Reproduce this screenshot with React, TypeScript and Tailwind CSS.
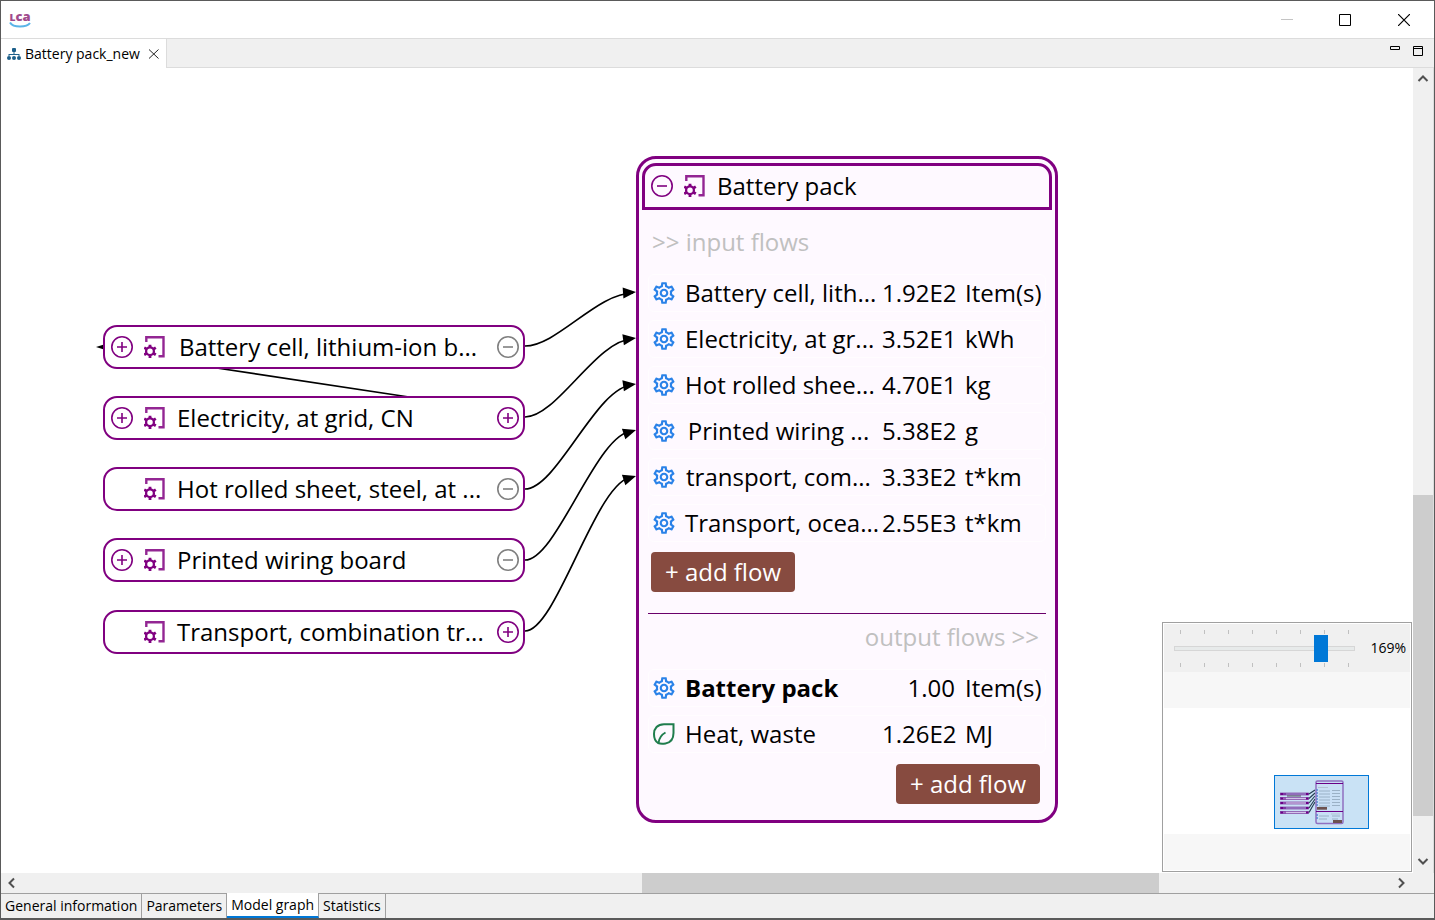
import React, { useState } from "react";
import { MdOutlineSettings } from "react-icons/md";

type Sign = "plus" | "minus";

interface ProcessNode {
  name: string;
  top: number;
  clipped: boolean;
  left?: Sign;
  right: Sign;
  rightMuted: boolean;
}

interface Flow {
  name: string;
  amount: string;
  unit: string;
  clipped?: boolean;
  bold?: boolean;
  kind: "product" | "waste";
}

const nodes: ProcessNode[] = [
  { name: "Battery cell, lithium-ion b...", top: 257, clipped: true, left: "plus", right: "minus", rightMuted: true },
  { name: "Electricity, at grid, CN", top: 328, clipped: false, left: "plus", right: "plus", rightMuted: false },
  { name: "Hot rolled sheet, steel, at ...", top: 399, clipped: true, right: "minus", rightMuted: true },
  { name: "Printed wiring board", top: 470, clipped: false, left: "plus", right: "minus", rightMuted: true },
  { name: "Transport, combination tr...", top: 542, clipped: true, right: "plus", rightMuted: false },
];

const inputs: Flow[] = [
  { name: "Battery cell, lith...", amount: "1.92E2", unit: "Item(s)", kind: "product" },
  { name: "Electricity, at gr...", amount: "3.52E1", unit: "kWh", kind: "product" },
  { name: "Hot rolled shee...", amount: "4.70E1", unit: "kg", kind: "product" },
  { name: "Printed wiring ...", amount: "5.38E2", unit: "g", clipped: true, kind: "product" },
  { name: "transport, com...", amount: "3.33E2", unit: "t*km", clipped: true, kind: "product" },
  { name: "Transport, ocea...", amount: "2.55E3", unit: "t*km", clipped: true, kind: "product" },
];

const outputs: Flow[] = [
  { name: "Battery pack", amount: "1.00", unit: "Item(s)", bold: true, kind: "product" },
  { name: "Heat, waste", amount: "1.26E2", unit: "MJ", kind: "waste" },
];

const edges = [
  { from: 278, to: 225, tilt: -4 },
  { from: 349, to: 271, tilt: -8 },
  { from: 421, to: 317, tilt: -8 },
  { from: 492, to: 363, tilt: -18 },
  { from: 563, to: 409, tilt: -18 },
];

function SignButton({ sign, muted = false }: { sign: Sign; muted?: boolean }) {
  return (
    <button
      type="button"
      aria-label={sign === "plus" ? "Expand" : "Collapse"}
      className={"block size-[22px] shrink-0 " + (muted ? "text-[#808080]" : "text-[#800080]")}
    >
      <svg viewBox="0 0 22 22" className="size-full" fill="none" stroke="currentColor" strokeWidth="1.6">
        <circle cx="11" cy="11" r="10.200" />
        <path d={sign === "plus" ? "M6 11h10M11 6v10" : "M6 11h10"} />
      </svg>
    </button>
  );
}

function ProcessIcon() {
  return (
    <svg viewBox="0 0 22 22" className="size-[22px] shrink-0" fill="none" stroke="#800080">
      <path d="M2.300 6V1.300h17.200v18.900h-5" strokeWidth="2.400" opacity="0.85" />
      <circle cx="6" cy="15.200" r="3.900" strokeWidth="2.300" />
      <path d="M6 8.700v2.500M6 19.200v2.800M.2 11.600l2.600 1.600M11.800 11.600l-2.600 1.600M.2 18.800l2.600-1.600M11.800 18.800l-2.600-1.600" strokeWidth="2.800" />
    </svg>
  );
}

function LeafIcon() {
  return (
    <svg viewBox="0 0 22 22" className="size-[22px]" fill="none" stroke="#1f7d4d" strokeWidth="2">
      <path d="M20.500 1.200H11C4.500 1.200 1 5.500 1 11c0 4.500 1.500 7.500 4 9 2 .8 5 .8 7.500.4C18 19.500 20.500 15.500 20.500 10z" />
      <path d="M5.500 20C6 15 8 12 12.500 9.500" />
    </svg>
  );
}

function FlowTable({ flows, label }: { flows: Flow[]; label: string }) {
  return (
    <table aria-label={label} className="mx-1.5 block">
      <tbody className="flex flex-col gap-2">
        {flows.map((f) => (
          <tr
            key={f.name}
            className="grid h-[38px] grid-cols-[22px_187px_73px_1fr] items-center gap-x-2.5 rounded-md border border-white/60 pl-1"
          >
            <td>
              {f.kind === "product" ? <MdOutlineSettings className="-m-0.5 size-[26px] text-[#2a82e8]" /> : <LeafIcon />}
            </td>
            <td
              className={
                "whitespace-nowrap " + (f.clipped ? "text-center " : "text-left ") + (f.bold ? "font-bold" : "")
              }
            >
              {f.name}
            </td>
            <td className="whitespace-nowrap text-right">{f.amount}</td>
            <td className="whitespace-nowrap">{f.unit}</td>
          </tr>
        ))}
      </tbody>
    </table>
  );
}

function AddFlow() {
  return (
    <button type="button" className="h-10 w-36 whitespace-nowrap rounded bg-[#874b40] text-white">
      + add flow
    </button>
  );
}

function Edges() {
  return (
    <svg className="absolute inset-0 size-full" fill="none" stroke="#000" strokeWidth="1.700">
      {edges.map((e) => (
        <g key={e.from}>
          <path d={`M524 ${e.from}C556 ${e.from} 596 ${e.to} 632 ${e.to}`} />
          <path d="M0 0L-13 -5.500V5.500Z" fill="#000" stroke="none" transform={`translate(635 ${e.to - 1}) rotate(${e.tilt})`} />
        </g>
      ))}
      <path d="M209 299L408 329" />
      <path d="M95 279l8-2.500v5z" fill="#000" stroke="none" />
    </svg>
  );
}

function Ticks() {
  return (
    <div aria-hidden="true" className="mx-1.5 flex h-1 justify-between">
      {[0, 1, 2, 3, 4, 5, 6, 7].map((t) => (
        <span key={t} className="w-px bg-[#c0c0c0]" />
      ))}
    </div>
  );
}

function Thumbnail() {
  const bars = [17, 21.5, 26, 31, 35.5];
  const lines = [15, 18, 21, 24, 27, 30];
  return (
    <svg viewBox="0 0 93 52" className="size-full">
      {bars.map((y, i) => (
        <g key={y}>
          <rect x="5.500" y={y} width="28" height="2" fill={i % 3 ? "#d3c4ea" : "#9a80c8"} stroke="#8650a8" strokeWidth=".8" />
          <path d={`M5.500 ${y + 1}h3M9.500 ${y + 1}h1M31 ${y + 1}h2.500`} stroke="#6b0087" strokeWidth="1.800" />
          <path d={`M34 ${y + 1}L40 ${14 + i * 3}`} stroke="#233b50" strokeWidth="1.100" />
        </g>
      ))}
      <path d="M12 20h14" stroke="#333" strokeWidth=".8" />
      <rect x="41" y="5" width="27" height="42.500" rx="1.500" fill="#c9dff5" stroke="#9070c0" strokeWidth="1.500" />
      <path d="M41 7.500h27M41 35.500h27" stroke="#6b0087" strokeWidth="1" />
      <path d="M43 11.500h10M56 38h9" stroke="#b3c3d5" />
      {lines.map((y) => (
        <g key={y}>
          <path d={`M41.500 ${y - 1}h1.500`} stroke="#1763c8" />
          <path d={`M44 ${y}h11M57 ${y - 0.5}h8`} stroke="#8fa4ba" strokeWidth=".8" />
        </g>
      ))}
      <path d="M44 40h10M57 40h8M44 43h8M57 43h6" stroke="#8fa4ba" strokeWidth=".8" />
      <path d="M41.500 39h1.500M41.500 42h1.500" stroke="#1763c8" />
      <rect x="42" y="31" width="10" height="2.700" fill="#6c514f" />
      <rect x="58" y="44" width="9" height="3" fill="#6c514f" />
    </svg>
  );
}

function Overview() {
  const [zoom, setZoom] = useState(84);
  return (
    <section aria-label="Overview" className="absolute bottom-px right-px flex h-[250px] w-[250px] flex-col border border-[#a0a0a0] bg-white p-px">
      <div className="flex h-12 shrink-0 items-center bg-[#f0f0f0] pl-2.5">
        <div className="flex w-[181px] flex-col gap-px">
          <Ticks />
          <input
            type="range"
            aria-label="Zoom"
            value={zoom}
            onChange={(e) => setZoom(Number(e.target.value))}
            className="m-0 block h-[27px] w-full appearance-none bg-transparent [&::-webkit-slider-runnable-track]:h-[5px] [&::-webkit-slider-runnable-track]:border [&::-webkit-slider-runnable-track]:border-[#d6d6d6] [&::-webkit-slider-runnable-track]:bg-[#e7eaea] [&::-webkit-slider-thumb]:-mt-3 [&::-webkit-slider-thumb]:h-[27px] [&::-webkit-slider-thumb]:w-3.5 [&::-webkit-slider-thumb]:appearance-none [&::-webkit-slider-thumb]:bg-[#0078d7]"
          />
          <Ticks />
        </div>
        <span className="flex-1 pr-1 text-right text-[14px]">169%</span>
      </div>
      <div className="h-9 shrink-0 bg-[#f7f7f7]" />
      <div className="relative flex-1">
        <div className="absolute bottom-[5px] right-[41px] h-[54px] w-[95px] border border-[#0078d7] bg-[#c9e2f5]">
          <Thumbnail />
        </div>
      </div>
      <div className="h-9 shrink-0 bg-[#f7f7f7]" />
    </section>
  );
}

function Chevron({ d }: { d: string }) {
  return (
    <svg viewBox="0 0 20 20" className="size-5 shrink-0" fill="none" stroke="#505050" strokeWidth="2">
      <path d={d} />
    </svg>
  );
}

const bottomTabs = ["General information", "Parameters", "Model graph", "Statistics"];

export default function App() {
  return (
    <div className="flex h-screen flex-col border border-b-2 border-[#5a5a5a] bg-white font-['Open_Sans','Noto_Sans',sans-serif] text-black">
      <header className="flex h-[37px] shrink-0 items-center pl-[7px]">
        <div className="relative h-5 w-6">
          <span className="block text-center text-[13px] font-extrabold leading-[13px] text-[#a04a8c]">ʟca</span>
          <svg viewBox="0 0 24 20" className="absolute inset-0 size-full" fill="none" stroke="#5ab4e8" strokeWidth="2">
            <path d="M2 12.500c2 3.500 7 4 10 4s8-.5 10-3.500" />
          </svg>
        </div>
        <div className="ml-auto flex items-center">
          <button type="button" aria-label="Minimize" className="flex w-[58px] justify-center">
            <svg viewBox="0 0 12 12" className="size-3" stroke="#c4c4c4"><path d="M0 5.500h12" /></svg>
          </button>
          <button type="button" aria-label="Maximize" className="flex w-[58px] justify-center">
            <svg viewBox="0 0 12 12" className="size-3" fill="none" stroke="#000"><path d="M.5.5h11v11H.5z" /></svg>
          </button>
          <button type="button" aria-label="Close" className="flex w-[60px] justify-center">
            <svg viewBox="0 0 12 12" className="size-3" stroke="#000" strokeWidth="1.200"><path d="M0 0l12 12M12 0L0 12" /></svg>
          </button>
        </div>
      </header>

      <div className="flex h-[30px] shrink-0 border-y border-[#dcdcdc] bg-[#f0f0f0]">
        <div className="-mb-px flex items-center border-r border-[#dcdcdc] bg-white pl-1.5 pr-0.5 text-[14px]">
          <svg viewBox="0 0 14 14" className="size-3.5" fill="#1d5f8a">
            <rect x="5" y="1" width="4" height="4" rx="1" />
            <path d="M6.500 5h1v2h-1zM1.500 7h11v2h-1V8h-9v1h-1z" />
            <circle cx="2" cy="11" r="2" />
            <circle cx="7" cy="11" r="2" />
            <circle cx="12" cy="11" r="2" />
          </svg>
          <span className="ml-1 whitespace-nowrap">Battery pack_new</span>
          <button type="button" aria-label="Close tab" className="ml-1 flex size-5 items-center justify-center">
            <svg viewBox="0 0 10 10" className="size-2.5" stroke="#222"><path d="M0 .5l9.500 9M9.500.5L0 9.500" /></svg>
          </button>
        </div>
        <div className="ml-auto flex gap-[13px] pr-[11px] pt-[7px]">
          <button type="button" aria-label="Minimize editor" className="block h-2.5">
            <svg viewBox="0 0 10 10" className="size-2.5" fill="none" stroke="#000"><path d="M.5.5h9v3h-9z" /></svg>
          </button>
          <button type="button" aria-label="Maximize editor" className="block h-2.5">
            <svg viewBox="0 0 10 10" className="size-2.5" fill="none" stroke="#000"><path d="M.5.5h9v9h-9zM.5 2.500h9" /></svg>
          </button>
        </div>
      </div>

      <div className="flex min-h-0 flex-1">
        <main className="relative flex-1 overflow-hidden text-[24px] leading-[30px]">
          <Edges />
          {nodes.map((n) => (
            <article
              key={n.name}
              style={{ top: n.top }}
              className="absolute left-[102px] flex h-11 w-[422px] items-center gap-[11px] rounded-[14px] border-2 border-[#800080] bg-white pl-1.5 pr-1"
            >
              {n.left ? <SignButton sign={n.left} /> : <span className="size-[22px] shrink-0" />}
              <ProcessIcon />
              <span className={"w-[302px] shrink-0 whitespace-nowrap " + (n.clipped ? "text-center" : "text-left")}>
                {n.name}
              </span>
              <span className="ml-auto">
                <SignButton sign={n.right} muted={n.rightMuted} />
              </span>
            </article>
          ))}

          <article className="absolute left-[635px] top-[88px] flex w-[422px] flex-col rounded-[20px] border-3 border-[#800080] bg-[#fef9ff] px-[3px] pb-4 pt-1">
            <header className="flex h-[47px] items-center gap-[11px] rounded-t-[14px] border-3 border-[#800080] pb-px pl-1.5">
              <SignButton sign="minus" />
              <ProcessIcon />
              <h1>Battery pack</h1>
            </header>
            <h2 className="flex h-16 items-center px-2.5 text-[#c0c0c0]">&gt;&gt; input flows</h2>
            <FlowTable flows={inputs} label="Input flows" />
            <div className="ml-[9px] mt-2.5 flex">
              <AddFlow />
            </div>
            <hr className="mx-1.5 mt-[21px] border-t border-[#6a006a]" />
            <h2 className="mb-[9px] flex h-[46px] items-center justify-end px-[13px] text-[#c0c0c0]">output flows &gt;&gt;</h2>
            <FlowTable flows={outputs} label="Output flows" />
            <div className="mr-3 mt-[11px] flex justify-end">
              <AddFlow />
            </div>
          </article>
          <Overview />
        </main>
        <div aria-hidden="true" className="flex w-5 shrink-0 flex-col items-center bg-[#f0f0f0]">
          <Chevron d="M5.500 13L10 8.500l4.500 4.500" />
          <div className="flex w-full flex-1 flex-col">
            <div className="grow-[407]" />
            <div className="grow-[321] bg-[#cdcdcd]" />
            <div className="grow-[37]" />
          </div>
          <Chevron d="M5.500 6L10 10.500L14.500 6" />
        </div>
        <div className="w-px shrink-0 bg-[#dcdcdc]" />
      </div>

      <div aria-hidden="true" className="flex h-5 shrink-0 items-center bg-[#f0f0f0] pr-[22px]">
        <Chevron d="M13 5.500L8.500 10l4.500 4.500" />
        <div className="flex h-full flex-1">
          <div className="grow-[621]" />
          <div className="grow-[517] bg-[#cdcdcd]" />
          <div className="grow-[233]" />
        </div>
        <Chevron d="M7 5.500L11.500 10L7 14.500" />
      </div>

      <nav role="tablist" className="flex h-[25px] shrink-0 border-t border-[#a0a0a0] bg-[#f0f0f0] text-[14px]">
        {bottomTabs.map((t) => {
          const active = t === "Model graph";
          return (
            <button
              key={t}
              type="button"
              role="tab"
              aria-selected={active}
              className={
                "whitespace-nowrap border-r border-[#a0a0a0] px-1 leading-[22px] " +
                (active ? "-mt-px h-[25px] border-b-2 border-b-[#0078d7] bg-white pt-px" : "h-6")
              }
            >
              {t}
            </button>
          );
        })}
      </nav>
    </div>
  );
}
